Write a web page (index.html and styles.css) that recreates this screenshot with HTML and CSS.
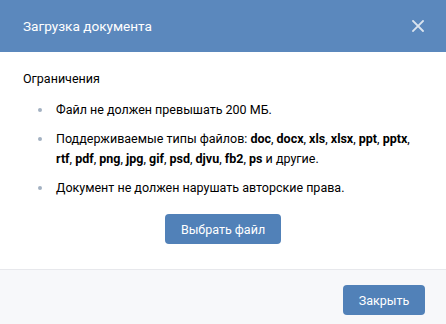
FILE: index.html
```html
<!DOCTYPE html>
<html lang="ru">
<head>
    <meta charset="UTF-8">
    <title>Загрузка документа</title>
    <link rel="stylesheet" href="styles.css">
</head>
<body>
    <div class="box">
        <div class="box-header">
            <div class="box-title">Загрузка документа</div>
            <div class="box-close">
                <svg width="12" height="12" viewBox="0 0 12 12">
                    <path d="M1 1L11 11M11 1L1 11" stroke="#dbe4ef" stroke-width="1.8" stroke-linecap="square"/>
                </svg>
            </div>
        </div>

        <div class="box-body">
            <div class="limits-title">Ограничения</div>
            <ul class="limits">
                <li>Файл не должен превышать 200 МБ.</li>
                <li>Поддерживаемые типы файлов: <b>doc</b>, <b>docx</b>, <b>xls</b>, <b>xlsx</b>, <b>ppt</b>, <b>pptx</b>, <b>rtf</b>, <b>pdf</b>, <b>png</b>, <b>jpg</b>, <b>gif</b>, <b>psd</b>, <b>djvu</b>, <b>fb2</b>, <b>ps</b> и другие.</li>
                <li>Документ не должен нарушать авторские права.</li>
            </ul>
            <div class="choose">
                <button class="btn">Выбрать файл</button>
            </div>
        </div>

        <div class="box-footer">
            <button class="btn btn-close">Закрыть</button>
        </div>
    </div>
</body>
</html>
```

FILE: styles.css
```css
* {
    box-sizing: border-box;
    margin: 0;
    padding: 0;
}

body {
    font-family: Roboto, 'Open Sans', sans-serif;
    font-size: 12.5px;
    color: #000;
    background: #fff;
}

.box {
    width: 446px;
}

.box-header {
    height: 52px;
    background: #5b88bd;
    display: flex;
    align-items: center;
    justify-content: space-between;
    padding: 0 22px 0 23px;
}

.box-title {
    color: #fff;
    font-size: 13.6px;
}

.box-close {
    display: flex;
    width: 12px;
    height: 12px;
}

.box-body {
    padding: 18px 23px 25px;
}

.limits-title {
    line-height: 18px;
    color: #000;
}

.limits {
    list-style: none;
    margin-top: 12px;
    padding-left: 33px;
}

.limits li {
    position: relative;
    line-height: 20px;
    margin-bottom: 9px;
}

.limits li::before {
    content: '';
    position: absolute;
    left: -18px;
    top: 8px;
    width: 4px;
    height: 4px;
    border-radius: 50%;
    background: #a3b1c2;
}

.limits b {
    font-weight: 700;
}

.choose {
    display: flex;
    justify-content: center;
    margin-top: 16px;
}

.btn {
    font-family: Roboto, 'Open Sans', sans-serif;
    font-size: 12.5px;
    color: #fff;
    background: #5181b8;
    border: none;
    border-radius: 4px;
    height: 30px;
    width: 116px;
    cursor: pointer;
}

.box-footer {
    border-top: 1px solid #e7e8ec;
    background: #f7f8fa;
    height: 56px;
    display: flex;
    justify-content: flex-end;
    padding: 15px 21px 0 0;
    align-items: flex-start;
}

.btn-close {
    width: 82px;
}
```
